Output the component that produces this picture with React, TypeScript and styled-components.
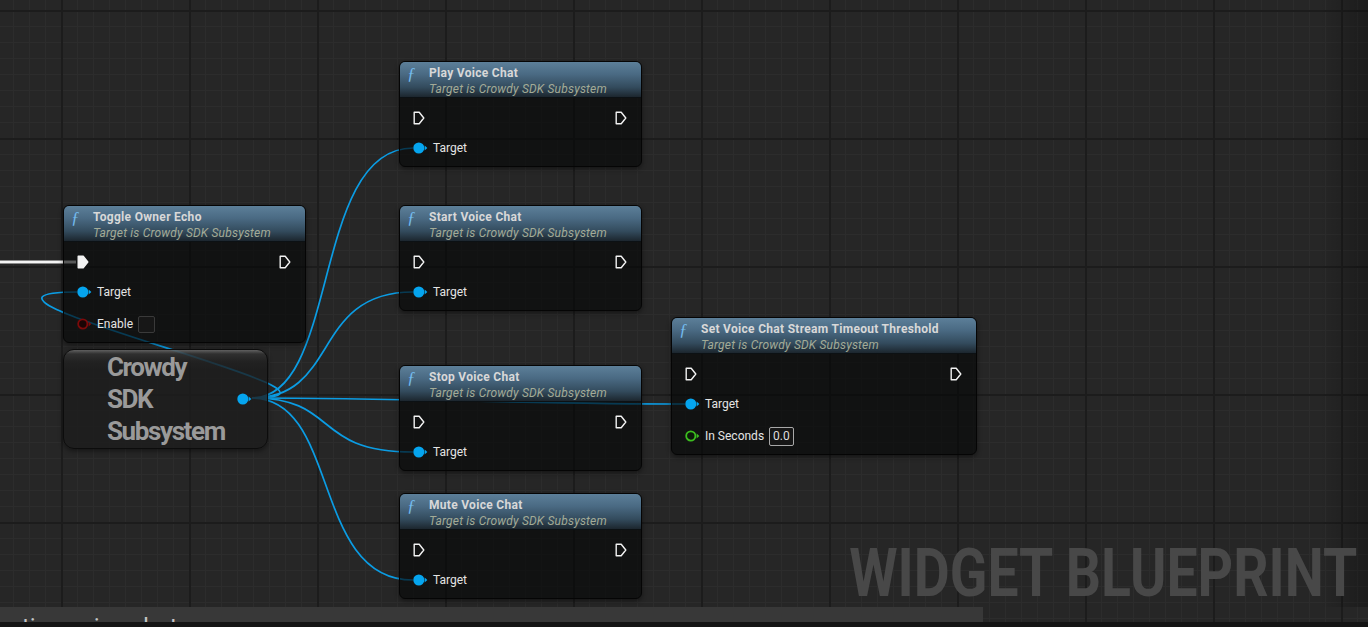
import React from 'react'
import styled, { createGlobalStyle } from 'styled-components'

const GlobalStyle = createGlobalStyle`
    html, body {
        margin: 0;
        padding: 0;
        background: #141414;
    }
    body {
        font-family: Roboto, 'Noto Sans', 'Liberation Sans', sans-serif;
        -webkit-font-smoothing: antialiased;
    }
`

const Viewport = styled.div`
    position: relative;
    width: 1368px;
    height: 627px;
    overflow: hidden;
    display: flex;
    flex-direction: column;
    background-color: #262626;
    background-image:
        linear-gradient(to right, #1c1c1c 0 2px, transparent 2px),
        linear-gradient(to bottom, #1c1c1c 0 2px, transparent 2px),
        linear-gradient(to right, #2c2c2c 0 1px, transparent 1px),
        linear-gradient(to bottom, #2c2c2c 0 1px, transparent 1px);
    background-size: 128px 128px, 128px 128px, 16px 16px, 16px 16px;
    background-position: 61px 10px, 61px 10px, 61px 10px, 61px 10px;
`

const Graph = styled.div`
    position: relative;
    flex: 1;
`

const Vignette = styled.div`
    position: absolute;
    inset: 0;
    pointer-events: none;
    background: linear-gradient(to left, rgba(0, 0, 0, 0.28) 0, rgba(0, 0, 0, 0) 48px);
`

const Wires = styled.svg`
    position: absolute;
    left: 0;
    top: 0;
    width: 100%;
    height: 100%;
    overflow: visible;
`

const Node = styled.div<{ $x: number; $y: number; $w: number }>`
    position: absolute;
    left: ${(p) => p.$x}px;
    top: ${(p) => p.$y}px;
    width: ${(p) => p.$w}px;
    border: 1px solid #050505;
    border-radius: 6px;
    background: rgba(6, 8, 7, 0.66);
    box-shadow: 0 2px 5px rgba(0, 0, 0, 0.45);
    overflow: hidden;
`

const Header = styled.div`
    height: 36px;
    box-sizing: border-box;
    padding: 4px 8px 0 6px;
    display: flex;
    background: linear-gradient(180deg, #5c7f99 0%, #4a6a83 35%, #334b5d 72%, #1c262e 100%);
    border-bottom: 1px solid #0c1114;
`

const FnIcon = styled.span`
    width: 22px;
    flex: none;
    font-family: 'Liberation Serif', 'DejaVu Serif', serif;
    font-style: italic;
    font-size: 17px;
    line-height: 15px;
    color: #74bbee;
    padding-left: 1px;
`

const HeaderText = styled.div`
    display: flex;
    flex-direction: column;
    white-space: nowrap;
`

const Title = styled.div`
    font-size: 12px;
    font-weight: 700;
    line-height: 15px;
    letter-spacing: 0.3px;
    color: #d8d8d8;
`

const Subtitle = styled.div`
    font-size: 12px;
    font-style: italic;
    line-height: 16px;
    letter-spacing: 0.2px;
    color: #a3ab97;
`

const Body = styled.div`
    padding: 5px 0 2px;
`

const Row = styled.div<{ $exec?: boolean }>`
    display: flex;
    align-items: center;
    justify-content: ${(p) => (p.$exec ? 'space-between' : 'flex-start')};
    height: ${(p) => (p.$exec ? 29 : 32)}px;
    padding: 0 14px 0 13px;
    gap: 5px;
`

const PinLabel = styled.span`
    font-size: 12px;
    color: #e4e4e4;
    white-space: nowrap;
`

const CheckBox = styled.span`
    width: 17px;
    height: 17px;
    box-sizing: border-box;
    border: 1px solid #3a3a3a;
    border-radius: 2px;
    background: #171717;
`

const NumberBox = styled.span`
    height: 19px;
    box-sizing: border-box;
    padding: 0 3px;
    border: 1px solid #a8a8a8;
    border-radius: 2px;
    background: #161616;
    font-size: 12px;
    line-height: 17px;
    color: #dedede;
`

const VariableNode = styled.div<{ $x: number; $y: number }>`
    position: absolute;
    left: ${(p) => p.$x}px;
    top: ${(p) => p.$y}px;
    width: 205px;
    height: 100px;
    box-sizing: border-box;
    display: flex;
    align-items: center;
    justify-content: space-between;
    padding: 0 15px 0 43px;
    border: 1px solid #0c0c0c;
    border-radius: 11px;
    background:
        linear-gradient(180deg, rgba(150, 150, 150, 0.55) 0, rgba(80, 80, 80, 0.35) 4px, rgba(40, 40, 40, 0.3) 12px, rgba(0, 0, 0, 0) 20px),
        rgba(28, 28, 28, 0.78);
    box-shadow: 0 2px 5px rgba(0, 0, 0, 0.45);
`

const VariableName = styled.div`
    font-size: 26px;
    font-weight: 700;
    line-height: 32px;
    letter-spacing: -1.4px;
    color: #9a9a9a;
`

const Watermark = styled.div`
    position: absolute;
    right: 11px;
    top: 541px;
    font-size: 66px;
    font-weight: 700;
    line-height: 66px;
    color: #484848;
    white-space: nowrap;
    transform: scaleX(0.838);
    transform-origin: right top;
    pointer-events: none;
`

const Drawer = styled.div`
    width: 983px;
    height: 15px;
    flex: none;
    overflow: hidden;
    box-sizing: border-box;
    padding: 8px 0 0 22px;
    background: #383838;
    font-size: 24px;
    line-height: 24px;
    color: #c4c4c4;
    white-space: nowrap;
`

const StatusStrip = styled.div`
    height: 5px;
    flex: none;
    background: #141414;
`

type PinKind = 'object' | 'bool' | 'float'

const pinColors: Record<PinKind, { stroke: string; fill: string }> = {
    object: { stroke: '#05a5ef', fill: '#05a5ef' },
    bool: { stroke: '#7c0a0a', fill: '#1a0404' },
    float: { stroke: '#3cbe1f', fill: '#0c1a09' },
}

const ExecPin = ({ filled }: { filled?: boolean }) => (
    <svg width="12" height="14" viewBox="0 0 12 14">
        <path
            d="M1.2 1.2 H6.2 L10.8 7 L6.2 12.8 H1.2 Z"
            fill={filled ? '#f2f2f2' : 'none'}
            stroke="#f2f2f2"
            strokeWidth="1.4"
            strokeLinejoin="round"
        />
    </svg>
)

const DataPin = ({ kind }: { kind: PinKind }) => {
    const c = pinColors[kind]
    const hollow = kind !== 'object'
    return (
        <svg width="15" height="12" viewBox="0 0 15 12" style={{ flex: 'none' }}>
            <circle
                cx="5.8"
                cy="6"
                r={hollow ? 4.6 : 5.5}
                fill={c.fill}
                stroke={hollow ? c.stroke : 'none'}
                strokeWidth={hollow ? 1.8 : 0}
            />
            <path d="M11.6 3.4 L14.4 6 L11.6 8.6 Z" fill={c.stroke} />
        </svg>
    )
}

type Pin = { label: string; kind: PinKind; widget?: 'check' | string }

type FnNode = {
    x: number
    y: number
    w: number
    title: string
    execConnected?: boolean
    pins: Pin[]
}

const target: Pin = { label: 'Target', kind: 'object' }

const fnNodes: FnNode[] = [
    { x: 63, y: 205, w: 241, title: 'Toggle Owner Echo', execConnected: true, pins: [target, { label: 'Enable', kind: 'bool', widget: 'check' }] },
    { x: 399, y: 61, w: 241, title: 'Play Voice Chat', pins: [target] },
    { x: 399, y: 205, w: 241, title: 'Start Voice Chat', pins: [target] },
    { x: 399, y: 365, w: 241, title: 'Stop Voice Chat', pins: [target] },
    { x: 399, y: 493, w: 241, title: 'Mute Voice Chat', pins: [target] },
    { x: 671, y: 317, w: 304, title: 'Set Voice Chat Stream Timeout Threshold', pins: [target, { label: 'In Seconds', kind: 'float', widget: '0.0' }] },
]

// wires leave the subsystem getter and land on each Target pin
const src = { x: 252, y: 398 }
const curve = (x: number, y: number, out = 88, into = 102) =>
    `M${src.x} ${src.y} C${src.x + out} ${src.y} ${x - into} ${y} ${x} ${y}`

const objectWires = [
    'M252 398 C400 398 -90 292 77 292',
    curve(413, 148),
    curve(413, 292),
    curve(413, 452),
    curve(413, 580),
    curve(685, 404, 150, 150),
]

const FunctionNode = ({ node }: { node: FnNode }) => (
    <Node $x={node.x} $y={node.y} $w={node.w}>
        <Header>
            <FnIcon>ƒ</FnIcon>
            <HeaderText>
                <Title>{node.title}</Title>
                <Subtitle>Target is Crowdy SDK Subsystem</Subtitle>
            </HeaderText>
        </Header>
        <Body>
            <Row $exec>
                <ExecPin filled={node.execConnected} />
                <ExecPin />
            </Row>
            {node.pins.map((pin) => (
                <Row key={pin.label}>
                    <DataPin kind={pin.kind} />
                    <PinLabel>{pin.label}</PinLabel>
                    {pin.widget === 'check' && <CheckBox />}
                    {pin.widget && pin.widget !== 'check' && <NumberBox>{pin.widget}</NumberBox>}
                </Row>
            ))}
        </Body>
    </Node>
)

export default function App() {
    return (
        <Viewport>
            <GlobalStyle />
            <Graph>
                <Vignette />
                <Wires>
                    <line x1="0" y1="262" x2="76" y2="262" stroke="#8a8a8a" strokeWidth="4" />
                    <line x1="0" y1="262" x2="76" y2="262" stroke="#f4f4f4" strokeWidth="2" />
                    {objectWires.map((d, i) => (
                        <path key={i} d={d} fill="none" stroke="#0b9ce3" strokeWidth="1.7" />
                    ))}
                </Wires>
                {fnNodes.map((n) => (
                    <FunctionNode key={n.title} node={n} />
                ))}
                <VariableNode $x={63} $y={349}>
                    <VariableName>
                        Crowdy
                        <br />
                        SDK
                        <br />
                        Subsystem
                    </VariableName>
                    <DataPin kind="object" />
                </VariableNode>
                <Watermark>WIDGET BLUEPRINT</Watermark>
            </Graph>
            <Drawer>tion voice chat</Drawer>
            <StatusStrip />
        </Viewport>
    )
}
